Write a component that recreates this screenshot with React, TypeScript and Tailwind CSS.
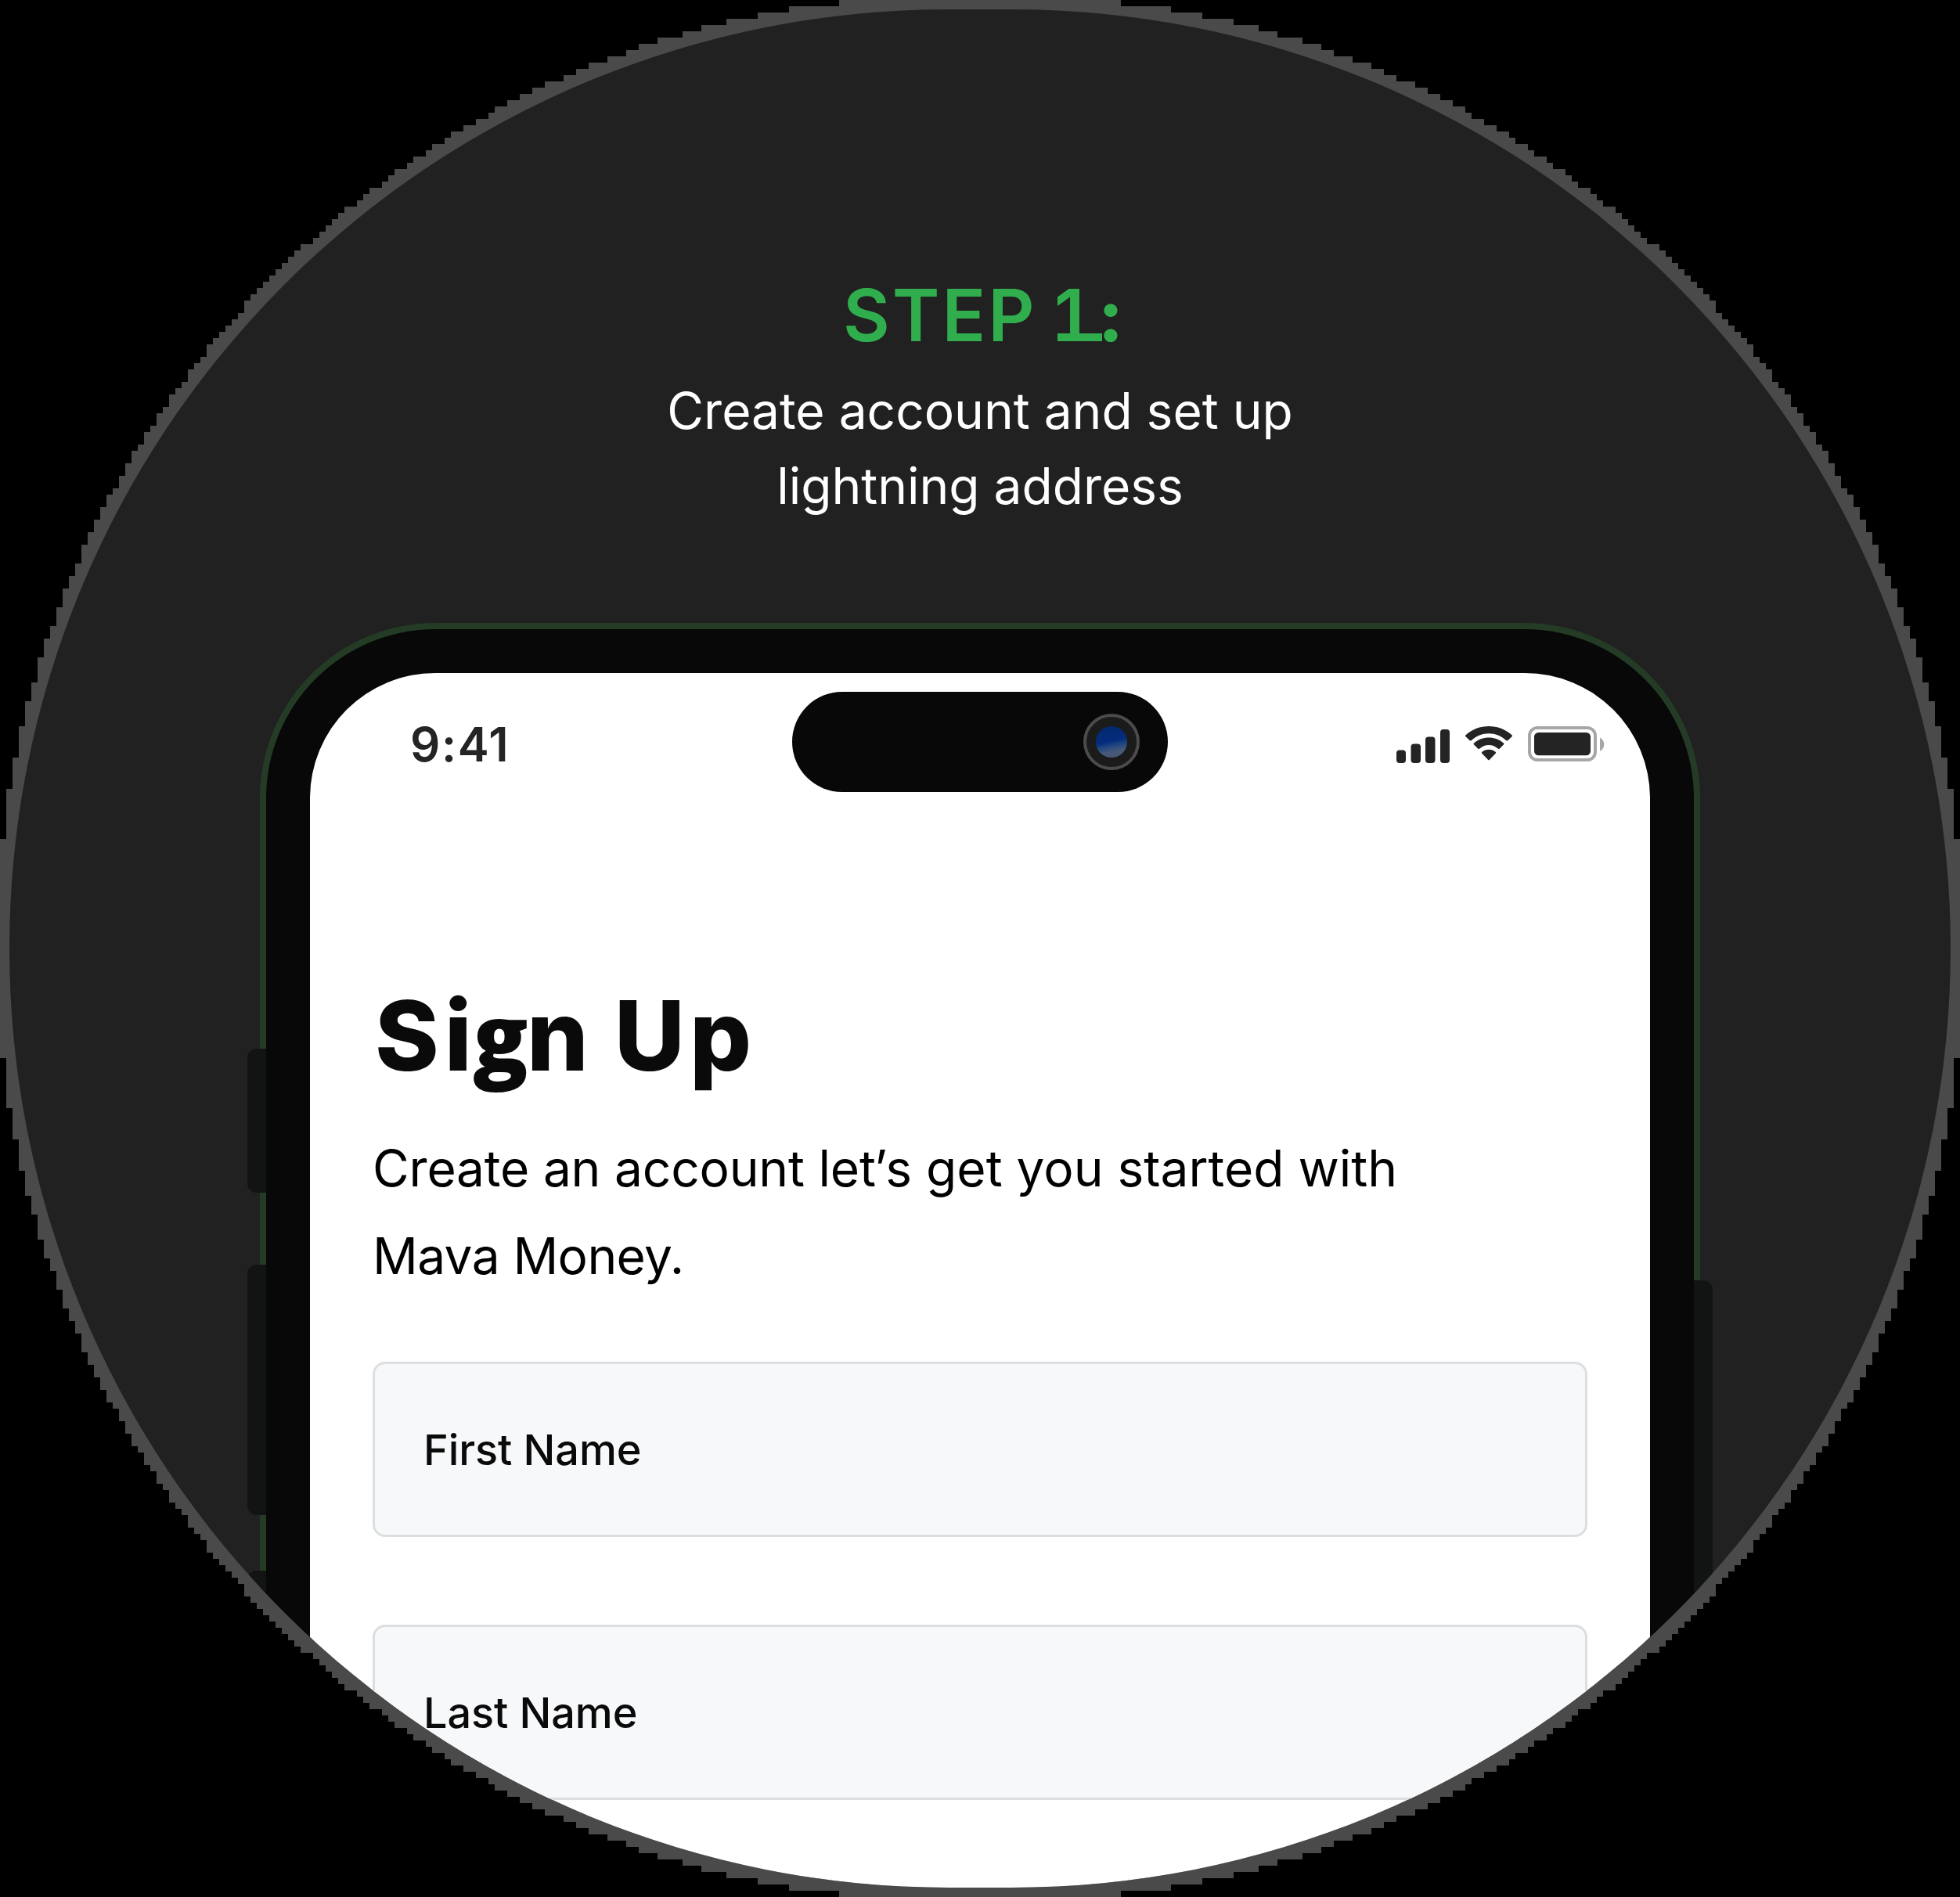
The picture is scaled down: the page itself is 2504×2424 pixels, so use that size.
const WIDTH = 2504;
const HEIGHT = 2424;
const RADIUS = 1212;
const CELL = 8;

// Outline of the stage: a full-radius frame whose edge is snapped to an 8px grid.
function steppedOutline(): string {
  const right: string[] = [];
  const left: string[] = [];
  for (let y = 0; y < HEIGHT; y += CELL) {
    const nearest = y + CELL <= RADIUS ? RADIUS - y - CELL : Math.max(0, y - RADIUS);
    const dx = Math.sqrt(RADIUS * RADIUS - nearest * nearest);
    const x0 = Math.max(0, Math.floor((RADIUS - dx) / CELL) * CELL);
    const x1 = WIDTH - x0;
    right.push(`${x1}px ${y}px`, `${x1}px ${y + CELL}px`);
    left.push(`${x0}px ${y}px`, `${x0}px ${y + CELL}px`);
  }
  // The left edge is walked bottom to top to close the polygon.
  return `polygon(${right.concat(left.reverse()).join(",")})`;
}

function SignalIcon() {
  return (
    <svg className="h-[48px] w-[68px]" viewBox="0 0 68 48" fill="#242424">
      <rect x="0" y="30.5" width="12" height="16.5" rx="4" />
      <rect x="18.5" y="22.5" width="12.5" height="24.5" rx="4" />
      <rect x="37" y="13.5" width="12.5" height="33.5" rx="4" />
      <rect x="56" y="4" width="12" height="43" rx="4" />
    </svg>
  );
}

function WifiIcon() {
  return (
    <svg className="h-[44px] w-[62px]" viewBox="0 0 62 44" fill="#242424">
      <path d="M31 9.2C39.3 9.2 47 12.4 53 18Q54.3 19 55.5 17.9L60.7 12.9Q61.4 12.1 60.7 11.4C44.2-3.8 17.8-3.8 1.3 11.4Q.6 12.1 1.3 12.9L6.5 17.9Q7.7 19 9 18C15 12.4 22.7 9.2 31 9.2Z" />
      <path d="M31 23.9C35.6 23.9 39.4 25.6 42.6 28.5Q43.8 29.4 45 28.4L50.2 23.3Q50.9 22.6 50.1 21.8C39.4 12.1 22.6 12.1 11.9 21.8Q11.1 22.6 11.8 23.3L17 28.4Q18.2 29.4 19.4 28.5C22.6 25.6 26.4 23.9 31 23.9Z" />
      <path d="M39.9 34.4Q40.7 33.6 39.8 32.9C34.6 28.8 27.4 28.8 22.2 32.9Q21.3 33.6 22.1 34.4L30 42.8Q31 43.8 32 42.8Z" />
    </svg>
  );
}

function BatteryIcon() {
  return (
    <svg className="h-[46px] w-[98px]" viewBox="0 0 98 46">
      <rect x="2" y="2" width="84" height="41" rx="10" fill="none" stroke="#a7a7a7" strokeWidth="4" />
      <rect x="8" y="8" width="72" height="29.3" rx="5.5" fill="#242424" />
      <path d="M92 14.7C95 16 97.2 19 97.2 23.2S95 30.400 92 31.700Z" fill="#a7a7a7" />
    </svg>
  );
}

function Field({ label }: { label: string }) {
  return (
    <div className="flex h-[224px] w-full items-center rounded-[16px] border-[3px] border-[#dcdfe0] bg-[#f7f8fa] pt-[2px] pl-[62px] text-[54px] leading-none font-[450] tracking-[-0.1px] text-[#0a0a0a]">
      {label}
    </div>
  );
}

export default function App() {
  return (
    <div className="h-[2424px] w-[2504px] overflow-hidden bg-black font-['Inter',sans-serif]">
      <div className="h-full w-full bg-[#4a4a4a] p-3" style={{ clipPath: steppedOutline() }}>
        <div className="flex h-full w-full flex-col items-center overflow-hidden rounded-full bg-[#212121]">
          <header className="flex h-[784px] shrink-0 flex-col items-center pt-[343px] text-center">
            <h1 className="h-[96px] pl-[11px] text-[92px] leading-[96px] font-semibold tracking-[3px] whitespace-nowrap text-[#30ae4e]">
              STEP{" "}
              <span className="relative inline-block w-[57px] text-left indent-[-4px]">
                1<span className="absolute bottom-[15px] left-0 h-[10px] w-[57px] bg-[#30ae4e]" />
              </span>
              <span className="ml-[-5px] font-extrabold">:</span>
            </h1>
            <p className="mt-[26px] text-[64px] leading-[96px] text-white">
              Create account and set up
              <br />
              lightning address
            </p>
          </header>

          <div className="relative h-[1800px] w-[1840px] shrink-0 rounded-t-[224px] border-x-[8px] border-t-[8px] border-[#243c26] bg-[#080808]">
            <span className="absolute top-[536px] left-[-24px] h-[184px] w-[24px] rounded-l-[12px] bg-[#121413]" />
            <span className="absolute top-[812px] left-[-24px] h-[320px] w-[24px] rounded-l-[12px] bg-[#121413]" />
            <span className="absolute top-[1203px] left-[-24px] h-[320px] w-[24px] rounded-l-[12px] bg-[#121413]" />
            <span className="absolute top-[832px] right-[-24px] h-[500px] w-[24px] rounded-r-[12px] bg-[#121413]" />

            <div className="mx-[56px] mt-[56px] h-[1740px] rounded-t-[160px] bg-white pt-6">
              <div className="flex h-[128px]">
                <div className="w-[616px] pt-[37px] pl-[128px] text-[60px] leading-[60px] font-semibold tracking-[1.6px] text-[#242424]">
                  9:41
                </div>
                <div className="flex h-[128px] w-[480px] items-center justify-end rounded-full bg-[#080808] pr-[36px]">
                  <div className="flex size-[72px] items-center justify-center rounded-full border-[4px] border-[#4b4b4b] bg-[#1b1b1b]">
                    <div className="size-[40px] rounded-full bg-[linear-gradient(168deg,#03286f_0%,#032c7c_48%,#1f4580_60%,#44587a_76%,#4c586c_100%)]" />
                  </div>
                </div>
                <div className="flex items-start pt-[44px] pl-[292px]">
                  <SignalIcon />
                  <div className="ml-[19px]">
                    <WifiIcon />
                  </div>
                  <div className="ml-[19px]">
                    <BatteryIcon />
                  </div>
                </div>
              </div>

              <main className="px-20 pt-[249px]">
                <h2 className="h-[124px] pl-[3px] text-[124px] leading-[124px] font-extrabold tracking-[3px] whitespace-nowrap text-[#0a0a0a]">
                  S<span className="ml-[4px]">i</span>
                  <span className="ml-[-2px] font-['Open_Sans',sans-serif] text-[117px] leading-none font-extrabold">g</span>
                  <span className="ml-[-5px]">n</span> U<span className="ml-[3px]">p</span>
                </h2>
                <p className="mt-[52px] text-[64px] leading-[112px] text-black">
                  <span className="tracking-[-0.2px]">Create an account let</span>
                  <span className="ml-[-2px]">’</span>
                  <span className="ml-[-2px]">s get you started with</span>
                  <br />
                  <span className="tracking-[-0.6px]">Mava Money.</span>
                </p>
                <div className="mt-[79px] flex flex-col gap-[112px]">
                  <Field label="First Name" />
                  <Field label="Last Name" />
                </div>
              </main>
            </div>
          </div>
        </div>
      </div>
    </div>
  );
}
